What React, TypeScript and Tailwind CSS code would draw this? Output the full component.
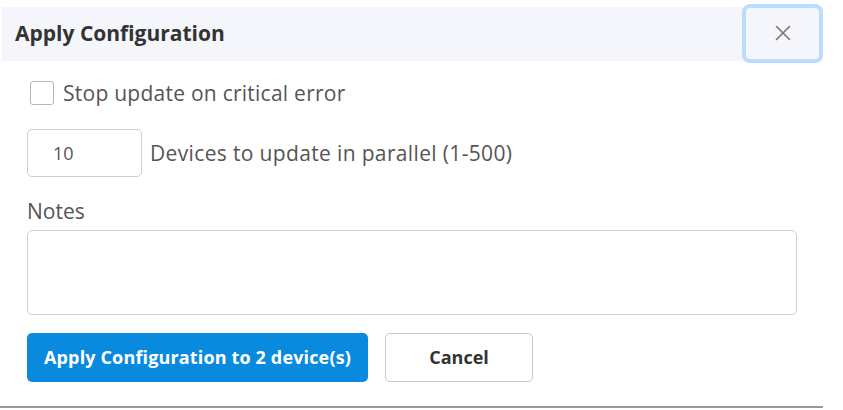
import { X } from "lucide-react";

export default function App() {
  return (
    <div className="h-[410px] w-[843px] bg-white font-['Open_Sans',sans-serif] text-[#555]">
      <div className="flex h-[408px] w-[823px] flex-col border-b-2 border-[#9a9a9a]">
        <div className="mt-[7px] ml-[2px] flex h-[54px] items-center justify-between bg-[#f5f6fb] pl-[13px]">
          <h1 className="text-[21px] font-bold text-[#333]">Apply Configuration</h1>
          <button className="-mt-[2px] flex h-[59px] w-[81px] items-center justify-center rounded-[8px] border-4 border-[#bcdcfd] bg-[#f5f6fb]">
            <X className="h-[26px] w-[26px] text-[#777]" strokeWidth={1.5} />
          </button>
        </div>

        <div className="flex flex-col px-[27px]">
          <label className="mt-[20px] flex h-[24px] items-center gap-[9px] pl-[3px]">
            <span className="h-[24px] w-[24px] rounded-[3px] border border-[#b5b5b5] bg-white" />
            <span className="text-[21px] leading-[24px] tracking-[0.25px]">Stop update on critical error</span>
          </label>

          <div className="mt-[24px] flex items-center gap-[8px]">
            <div className="flex h-[48px] w-[115px] items-center rounded-[5px] border border-[#cfcfcf] pl-[25px] text-[18px]">
              10
            </div>
            <span className="text-[21px] leading-[24px] tracking-[0.35px]">Devices to update in parallel (1-500)</span>
          </div>

          <div className="mt-[22px] text-[21px] leading-[24px]">Notes</div>
          <div className="mt-[7px] h-[85px] w-[770px] rounded-[5px] border border-[#cfcfcf]" />

          <div className="mt-[18px] flex gap-[17px]">
            <button className="h-[49px] w-[341px] rounded-[5px] bg-[#0a8ade] text-[18px] font-bold tracking-[0.15px] text-white">
              Apply Configuration to 2 device(s)
            </button>
            <button className="h-[49px] w-[148px] rounded-[5px] border border-[#c8c8c8] bg-white text-[18px] font-bold text-[#333]">
              Cancel
            </button>
          </div>
        </div>
      </div>
    </div>
  );
}
